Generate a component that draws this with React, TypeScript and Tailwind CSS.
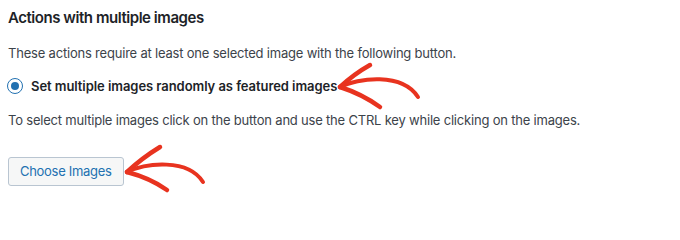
import React from "react";

function Arrows() {
  return (
    <svg
      className="absolute inset-0 pointer-events-none"
      width={680}
      height={202}
      viewBox="0 0 680 202"
      fill="none"
    >
      <g stroke="#e8331f" strokeLinecap="round" strokeLinejoin="round">
        <path d="M370 65 Q354 74 340 87" strokeWidth={4.5} />
        <path d="M340 87 C 358 78, 402 72, 418 97" strokeWidth={4} />
        <path d="M340 87 Q362 94 380 107" strokeWidth={4.5} />

        <path d="M160 147 Q142 158 127 172" strokeWidth={4.5} />
        <path d="M127 172 C 146 163, 188 158, 203 182" strokeWidth={4} />
        <path d="M127 172 Q150 178 167 190" strokeWidth={4.5} />
      </g>
    </svg>
  );
}

export default function App() {
  return (
    <div className="relative w-[680px] h-[202px] overflow-hidden bg-white pl-2 pt-2 font-['Inter','Liberation_Sans',sans-serif]">
      <h2 className="text-[15px] leading-[20px] font-semibold tracking-[-0.45px] text-[#1d2327]">
        Actions with multiple images
      </h2>
      <p className="mt-[15px] text-[13px] leading-[20px] tracking-[-0.2px] text-[#3c434a]">
        These actions require at least one selected image with the following button.
      </p>
      <label className="mt-[13px] flex items-center gap-[8px] text-[13px] leading-[20px] font-semibold tracking-[-0.06px] text-[#1d2327]">
        <span className="-ml-px flex h-[16px] w-[16px] items-center justify-center rounded-full border-[1.5px] border-[#2271b1] bg-white">
          <span className="h-[8px] w-[8px] rounded-full bg-[#2271b1]" />
        </span>
        Set multiple images randomly as featured images
      </label>
      <p className="mt-[14px] text-[13px] leading-[20px] tracking-[-0.2px] text-[#3c434a]">
        To select multiple images click on the button and use the CTRL key while clicking on the images.
      </p>
      <button className="mt-[27px] flex h-[29px] items-center rounded-[3px] border border-[#b9c5d1] bg-[#f6f7f7] px-[11px] text-[13px] tracking-[-0.3px] text-[#2271b1]">
        Choose Images
      </button>
      <Arrows />
    </div>
  );
}
